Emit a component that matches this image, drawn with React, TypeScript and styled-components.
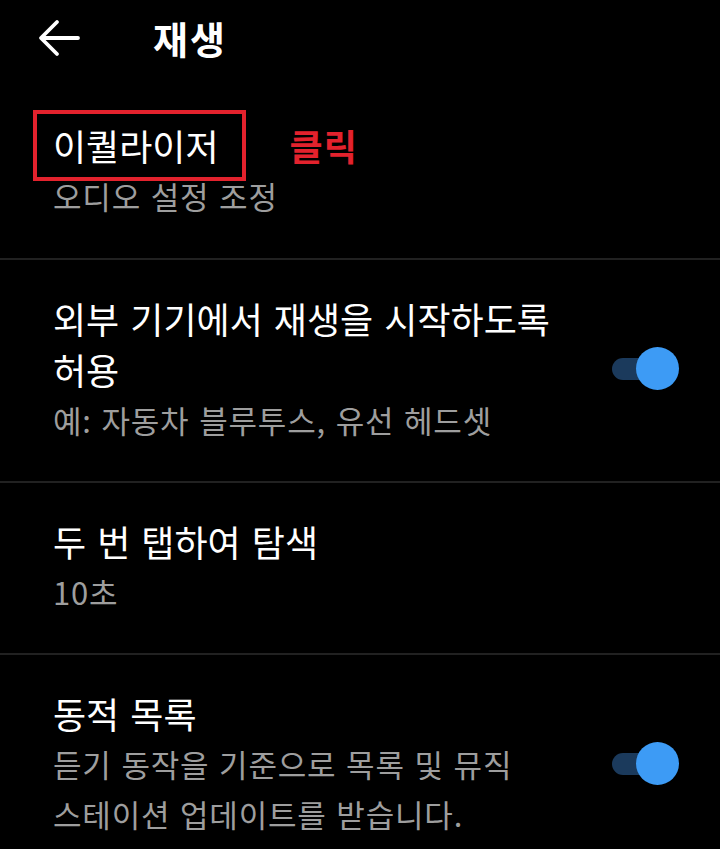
import React from "react";
import styled, { createGlobalStyle } from "styled-components";

const GlobalStyle = createGlobalStyle`
  html, body {
    margin: 0;
    padding: 0;
    background: #000;
  }
  body {
    font-family: "Noto Sans CJK KR", "Noto Sans", sans-serif;
    -webkit-font-smoothing: antialiased;
  }
`;

const Screen = styled.div`
  width: 720px;
  height: 849px;
  overflow: hidden;
  background: #000;
  color: #fff;
`;

const Header = styled.header`
  display: flex;
  align-items: center;
  height: 76px;
  padding-left: 38px;
  gap: 73px;
`;

const BackButton = styled.button`
  display: flex;
  align-items: center;
  justify-content: center;
  width: 42px;
  height: 42px;
  padding: 0;
  border: none;
  background: transparent;
  color: #fff;
`;

const HeaderTitle = styled.h1`
  margin: 0;
  font-size: 38px;
  font-weight: 700;
  letter-spacing: 2px;
  line-height: 1;
`;

const Item = styled.div<{ $top?: number; $bottom?: number; $last?: boolean }>`
  display: flex;
  align-items: center;
  justify-content: space-between;
  gap: 32px;
  padding: ${(p) => p.$top ?? 33}px 41px ${(p) => p.$bottom ?? 36}px 53px;
  border-bottom: ${(p) => (p.$last ? "none" : "2px solid #212121")};
`;

const ItemText = styled.div`
  display: flex;
  flex-direction: column;
  flex: 1;
  min-width: 0;
  word-break: keep-all;
`;

const TitleRow = styled.div`
  display: flex;
  align-items: center;
  gap: 71px;
`;

const Title = styled.div`
  font-size: 36px;
  line-height: 51px;
  word-spacing: 3px;
  color: #fff;
`;

const Highlighted = styled.span`
  position: relative;
  display: inline-block;

  &::before {
    content: "";
    position: absolute;
    left: -20px;
    right: -27px;
    top: -10px;
    bottom: -10px;
    border: 4px solid #e3222d;
  }
`;

const ClickLabel = styled.span`
  font-size: 36px;
  line-height: 51px;
  font-weight: 700;
  letter-spacing: 1px;
  color: #e3222d;
`;

const Subtitle = styled.div`
  font-size: 31px;
  line-height: 50px;
  letter-spacing: 0.8px;
  word-spacing: 2px;
  color: #9e9e9e;
`;

const Toggle = styled.div`
  position: relative;
  flex-shrink: 0;
  width: 67px;
  height: 44px;
  display: flex;
  align-items: center;
`;

const Track = styled.div`
  width: 56px;
  height: 22px;
  border-radius: 11px;
  background: #1b3a5c;
`;

const Thumb = styled.div`
  position: absolute;
  right: 0;
  top: 0;
  width: 43px;
  height: 43px;
  border-radius: 50%;
  background: #3d9bf5;
`;

const Switch = () => (
  <Toggle>
    <Track />
    <Thumb />
  </Toggle>
);

export default function App() {
  return (
    <Screen>
      <GlobalStyle />
      <Header>
        <BackButton aria-label="back">
          <svg width="42" height="42" viewBox="0 0 42 42" fill="none">
            <path
              d="M40 21H4M19 5L3 21l16 16"
              stroke="#fff"
              strokeWidth="3.8"
              strokeLinecap="round"
              strokeLinejoin="round"
            />
          </svg>
        </BackButton>
        <HeaderTitle>재생</HeaderTitle>
      </Header>

      <Item $top={44} $bottom={37}>
        <ItemText>
          <TitleRow>
            <Title>
              <Highlighted>이퀄라이저</Highlighted>
            </Title>
            <ClickLabel>클릭</ClickLabel>
          </TitleRow>
          <Subtitle>오디오 설정 조정</Subtitle>
        </ItemText>
      </Item>

      <Item>
        <ItemText>
          <Title>외부 기기에서 재생을 시작하도록 허용</Title>
          <Subtitle>예: 자동차 블루투스, 유선 헤드셋</Subtitle>
        </ItemText>
        <Switch />
      </Item>

      <Item>
        <ItemText>
          <Title>두 번 탭하여 탐색</Title>
          <Subtitle>10초</Subtitle>
        </ItemText>
      </Item>

      <Item $last>
        <ItemText>
          <Title>동적 목록</Title>
          <Subtitle>듣기 동작을 기준으로 목록 및 뮤직 스테이션 업데이트를 받습니다.</Subtitle>
        </ItemText>
        <Switch />
      </Item>
    </Screen>
  );
}
